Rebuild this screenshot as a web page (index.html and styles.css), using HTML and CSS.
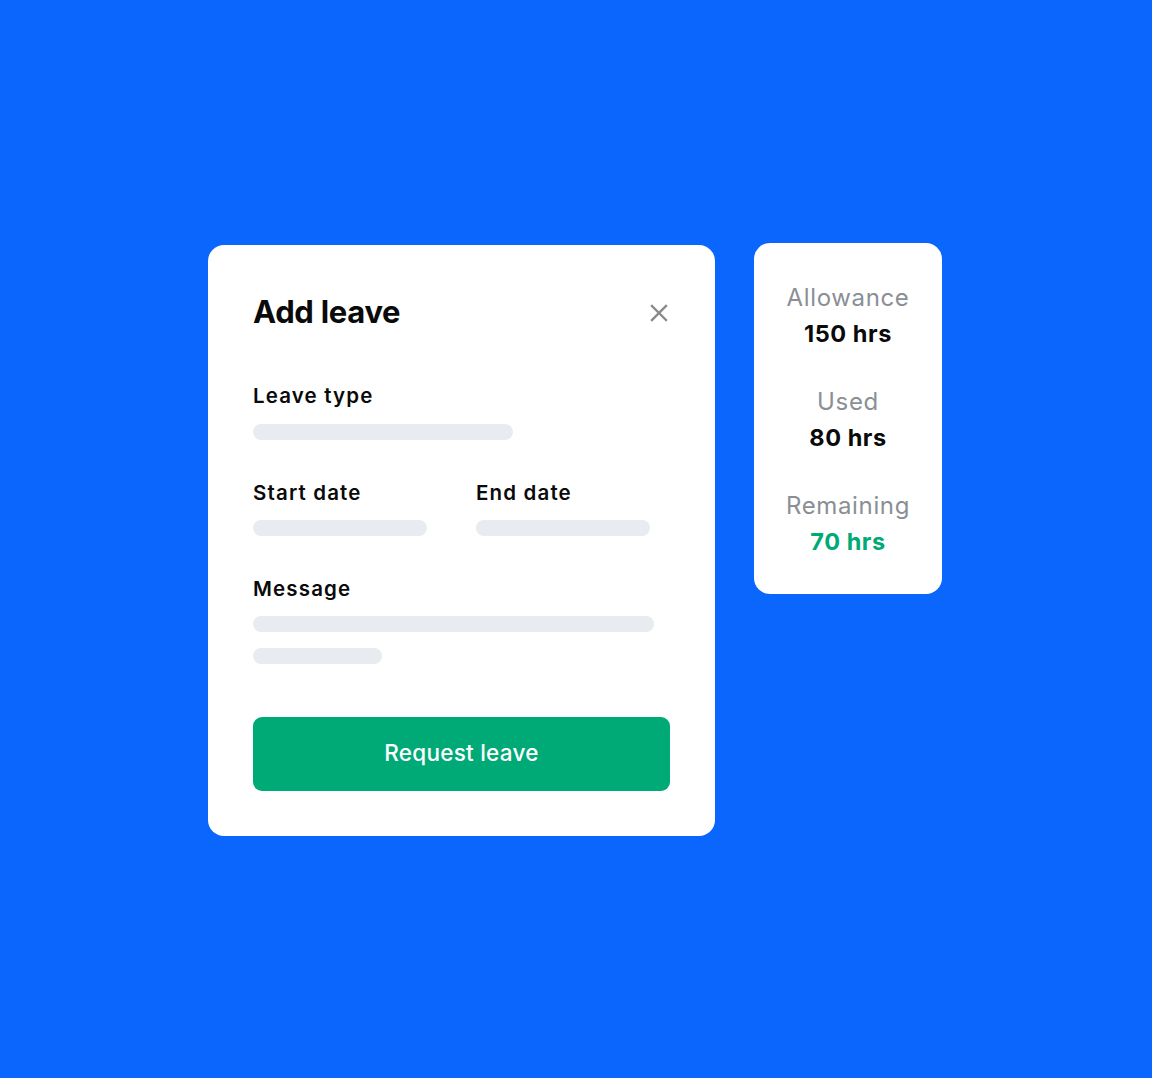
FILE: index.html
```html
<!DOCTYPE html>
<html lang="en">
<head>
<meta charset="utf-8">
<title>Add leave</title>
<link rel="stylesheet" href="styles.css">
</head>
<body>
<div class="stage">
  <div class="card form-card">
    <div class="header">
      <h1 class="title">Add leave</h1>
      <svg class="close" width="18" height="18" viewBox="0 0 18 18" aria-hidden="true">
        <path d="M2 2 L16 16 M16 2 L2 16" stroke="#8a8a8a" stroke-width="2.4" stroke-linecap="square" fill="none"/>
      </svg>
    </div>
    <div class="field field-first">
      <div class="label">Leave type</div>
      <div class="bar bar-type"></div>
    </div>
    <div class="row">
      <div class="field">
        <div class="label">Start date</div>
        <div class="bar bar-date"></div>
      </div>
      <div class="field">
        <div class="label">End date</div>
        <div class="bar bar-date"></div>
      </div>
    </div>
    <div class="field field-msg">
      <div class="label">Message</div>
      <div class="bar bar-msg"></div>
      <div class="bar bar-msg2"></div>
    </div>
    <button class="btn">Request leave</button>
  </div>
  <div class="card stats-card">
    <div class="stat">
      <div class="stat-label">Allowance</div>
      <div class="stat-value">150 hrs</div>
    </div>
    <div class="stat">
      <div class="stat-label">Used</div>
      <div class="stat-value">80 hrs</div>
    </div>
    <div class="stat">
      <div class="stat-label">Remaining</div>
      <div class="stat-value green">70 hrs</div>
    </div>
  </div>
</div>
</body>
</html>
```
FILE: styles.css
```css
* { box-sizing: border-box; }
html, body { margin: 0; padding: 0; }
body {
  background: #0b66fe;
  width: 1152px;
  height: 1078px;
  overflow: hidden;
  font-family: Inter, Lato, "Liberation Sans", sans-serif;
  color: #0a0a0a;
}
.stage {
  display: flex;
  align-items: flex-start;
  gap: 39px;
  padding: 243px 0 0 208px;
}
.card {
  background: #ffffff;
  border-radius: 16px;
}
.form-card {
  width: 507px;
  margin-top: 2px;
  padding: 46px 45px 45px 45px;
  display: flex;
  flex-direction: column;
}
.header {
  display: flex;
  justify-content: space-between;
  align-items: center;
  height: 40px;
  margin-top: 1px;
}
.title {
  margin: 0;
  font-size: 31px;
  line-height: 40px;
  font-weight: 700;
  letter-spacing: -0.3px;
}
.close { margin-right: 2px; margin-top: 2px; }
.field { display: flex; flex-direction: column; }
.field-first { margin-top: 50px; }
.label {
  font-size: 20.5px;
  line-height: 24px;
  font-weight: 600;
  letter-spacing: 1.15px;
  padding-top: 2px;
}
.bar {
  height: 16px;
  border-radius: 8px;
  background: #e8ecf0;
  margin-top: 16px;
}
.bar-type { width: 260px; }
.row {
  display: grid;
  grid-template-columns: 174px 174px;
  column-gap: 49px;
  margin-top: 39px;
}
.bar-date { width: 174px; margin-top: 15px; }
.field-msg { margin-top: 39px; }
.bar-msg { width: 401px; margin-top: 15px; }
.bar-msg2 { width: 129px; margin-top: 16px; }
.btn {
  margin-top: 53px;
  height: 74px;
  width: 100%;
  border: 0;
  border-radius: 9px;
  background: #00aa76;
  color: #ffffff;
  font-family: Inter, Lato, "Liberation Sans", sans-serif;
  font-size: 22.5px;
  line-height: 28px;
  font-weight: 500;
  letter-spacing: 0.25px;
  padding: 0 0 3px 0;
}
.stats-card {
  width: 188px;
  padding: 37px 0 34px 0;
  display: flex;
  flex-direction: column;
  align-items: center;
  gap: 32px;
  text-align: center;
}
.stat-label {
  font-size: 24px;
  line-height: 36px;
  font-weight: 400;
  letter-spacing: 0.65px;
  color: #8a8f95;
}
.stat-value {
  font-size: 23.5px;
  line-height: 36px;
  font-weight: 700;
  letter-spacing: 0.55px;
}
.green { color: #00aa76; }
```
